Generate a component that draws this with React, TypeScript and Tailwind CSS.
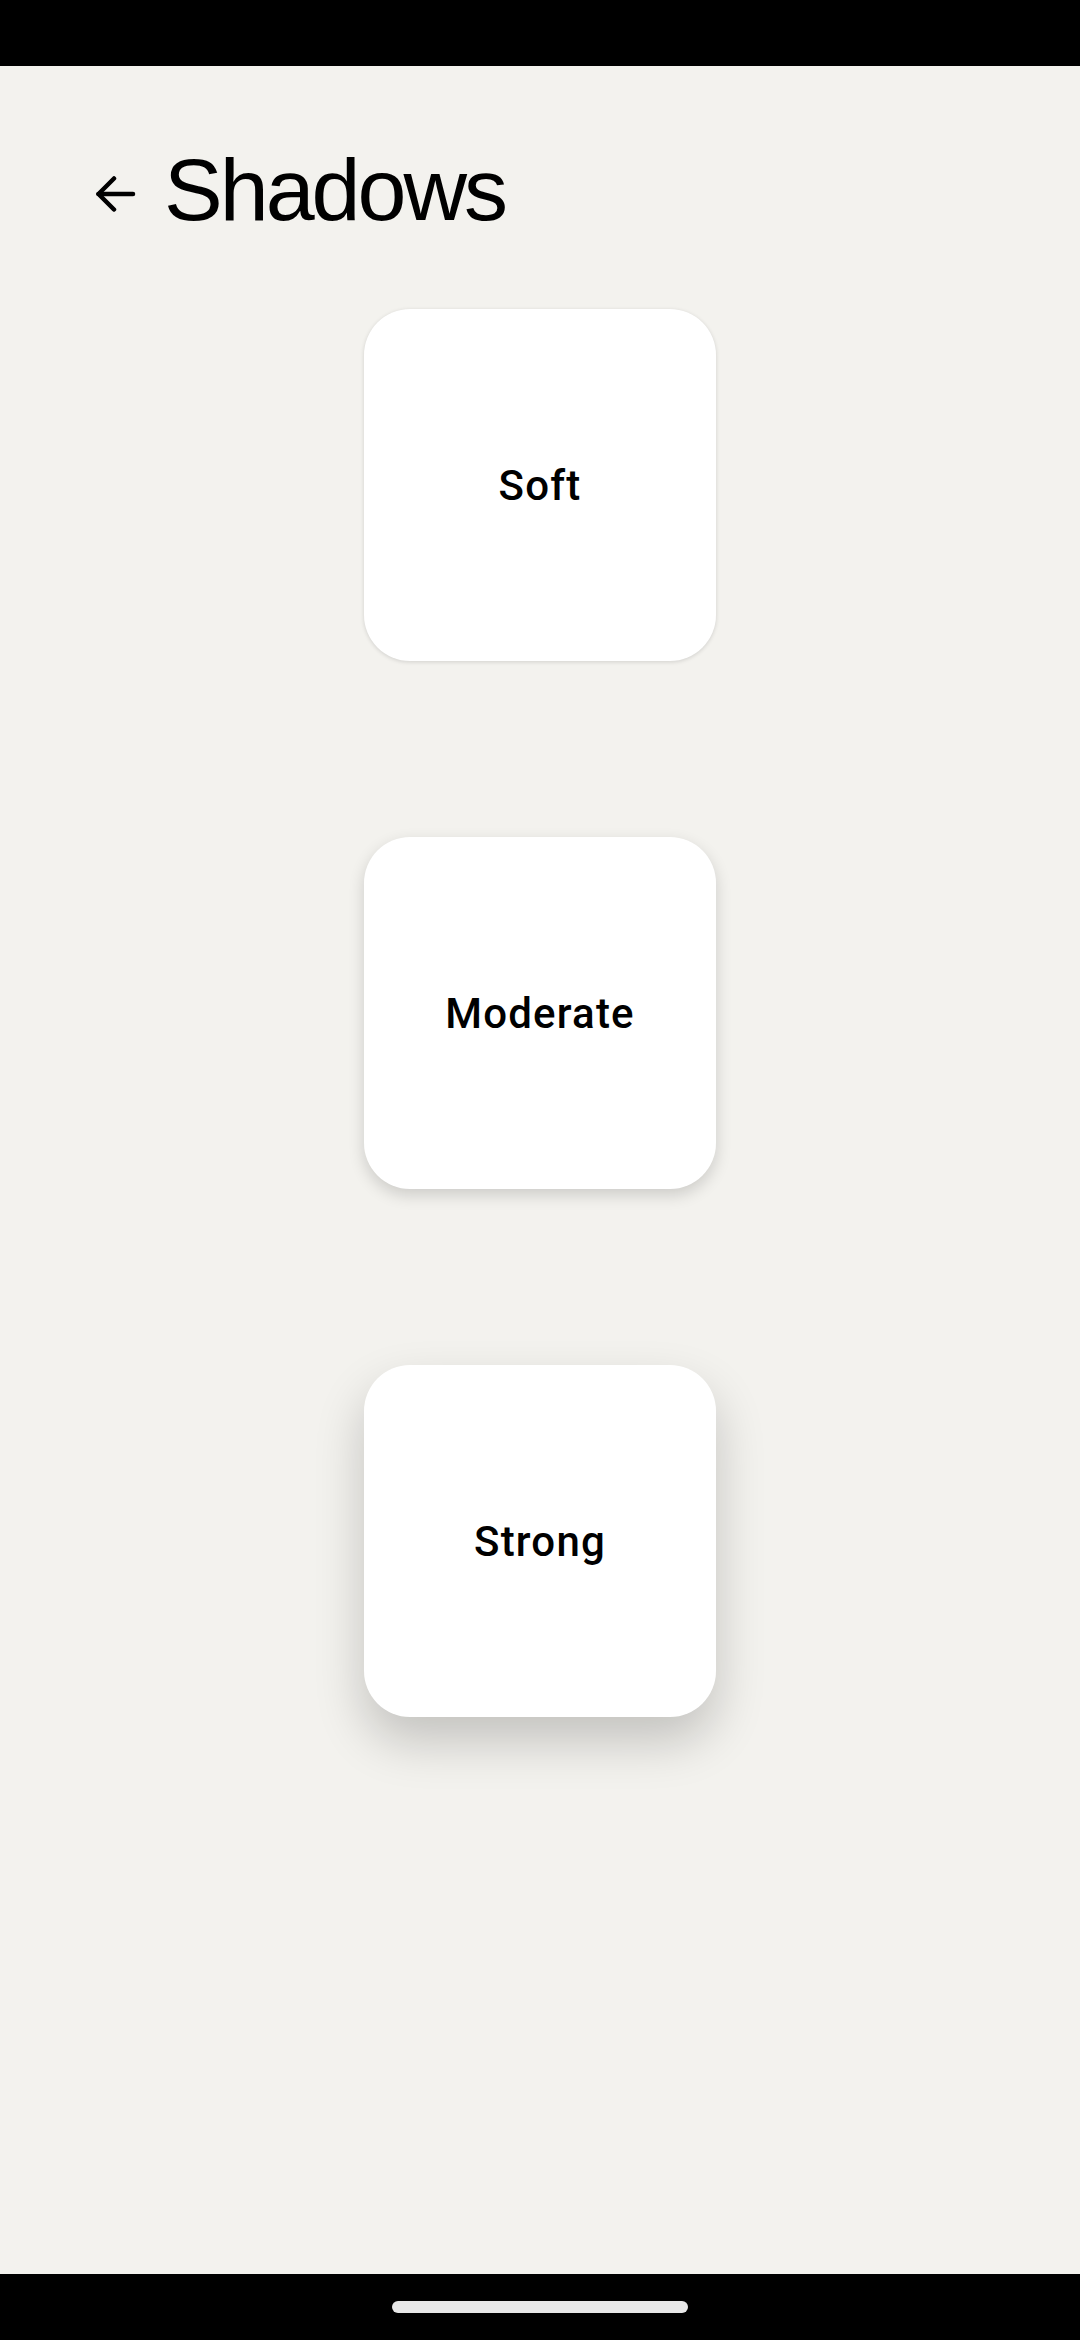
import React from "react";

function Card({ label, shadow }: { label: string; shadow: string }) {
  return (
    <div
      className={`w-[352px] h-[352px] bg-white rounded-[46px] flex items-center justify-center ${shadow}`}
    >
      <span className="text-[42px] font-medium text-black tracking-[1.2px] font-['Roboto',sans-serif]">
        {label}
      </span>
    </div>
  );
}

export default function App() {
  return (
    <div className="w-[1080px] h-[2340px] flex flex-col bg-[#f3f2ee]">
      <div className="h-[66px] bg-black shrink-0" />
      <main className="flex-1 flex flex-col">
        <div className="flex items-center h-[88px] mt-[80px] pl-[96px]">
          <svg
            width="40"
            height="36"
            viewBox="0 0 40 36"
            fill="none"
            stroke="black"
            strokeWidth="4.5"
            strokeLinecap="round"
            strokeLinejoin="round"
            className="mt-[8px]"
          >
            <path d="M18 2.5 L2.5 18 L18 33.5" />
            <path d="M2.5 18 H37" />
          </svg>
          <h1 className="ml-[28px] text-[88px] leading-none text-black tracking-[-3px] font-['Liberation_Sans',Arial,sans-serif]">
            Shadows
          </h1>
        </div>
        <div className="flex flex-col items-center gap-[176px] mt-[75px]">
          <Card label="Soft" shadow="shadow-[0_1px_4px_rgba(0,0,0,0.14)]" />
          <Card label="Moderate" shadow="shadow-[0_6px_16px_rgba(0,0,0,0.16)]" />
          <Card label="Strong" shadow="shadow-[0_24px_50px_rgba(0,0,0,0.2)]" />
        </div>
      </main>
      <div className="h-[66px] bg-black shrink-0 flex justify-center">
        <div className="mt-[27px] w-[296px] h-[12px] rounded-full bg-[#e8e8e8]" />
      </div>
    </div>
  );
}
